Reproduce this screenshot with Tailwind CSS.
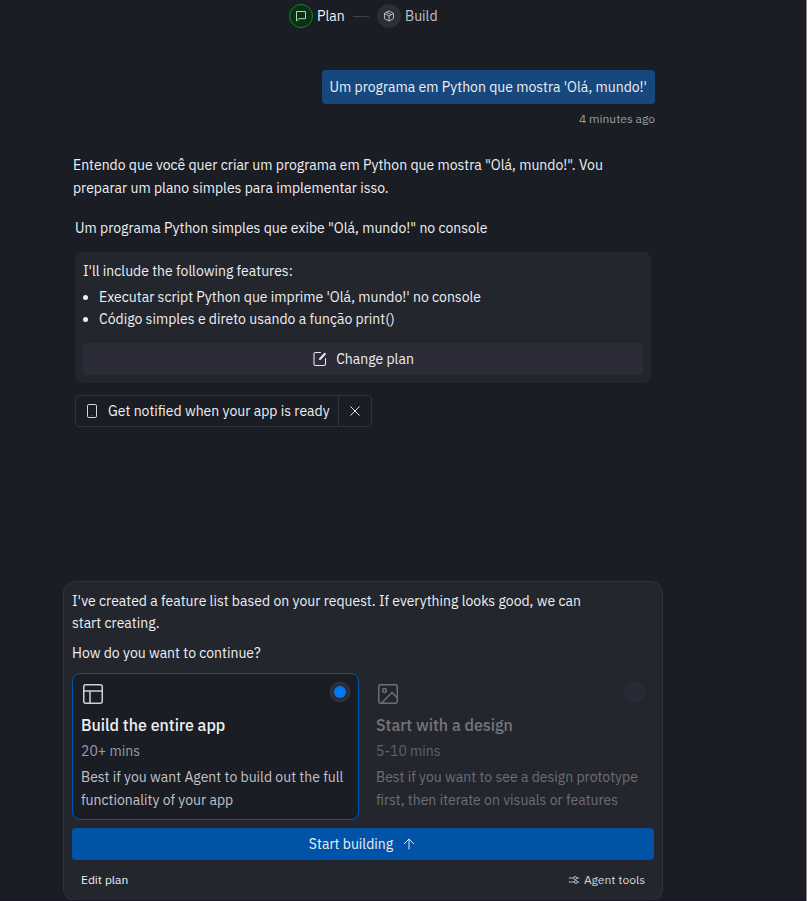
<!DOCTYPE html>
<html lang="en">
<head>
  <meta charset="UTF-8" />
  <meta name="viewport" content="width=device-width,initial-scale=1.0" />
  <title>Agent - Plan</title>
  <script src="https://cdn.jsdelivr.net/npm/@tailwindcss/browser@4"></script>
</head>
<body class="bg-[#1b1d25] font-['IBM_Plex_Sans',Roboto,sans-serif] text-[14px] leading-[22px] text-[#eef0f3]">
  <div class="w-[807px] h-[901px] overflow-hidden flex flex-col border-r border-[#85858a]">

    <!-- Steps -->
    <nav class="h-8 pl-[289px] pt-1 flex items-start">
      <div class="flex items-center h-6">
        <span class="w-6 h-6 rounded-full border border-[#0b8a1c] bg-[#0c2f18] flex items-center justify-center">
          <svg class="w-3 h-3" viewBox="0 0 12 12" fill="none" stroke="#a9dcb4" stroke-width="1"><path d="M1.5 1.5h9v7.2H3.9L1.5 10.9z" stroke-linejoin="round" /></svg>
        </span>
        <span class="ml-1 w-7 whitespace-nowrap">Plan</span>
        <span class="ml-2 w-4 h-px bg-[#3f424e]"></span>
        <span class="ml-2 w-6 h-6 rounded-full bg-[#2e2f34] flex items-center justify-center">
          <svg class="w-3 h-3" viewBox="0 0 12 12" fill="none" stroke="#b9bbc1" stroke-width="1" stroke-linejoin="round"><path d="M6 .9l4.5 2.5v5.2L6 11.1 1.5 8.6V3.4zM1.5 3.4L6 6l4.5-2.6M6 6v5.1M3.7 2.2l4.5 2.5" /></svg>
        </span>
        <span class="ml-1 whitespace-nowrap text-[#c0c3cb]">Build</span>
      </div>
    </nav>

    <!-- Chat -->
    <main class="pl-[73px] pr-[151px] pt-[38px] h-[549px] flex flex-col">
      <div class="self-end h-[34px] px-2 rounded bg-[#16487d] flex items-center whitespace-nowrap">Um programa em Python que mostra 'Olá, mundo!'</div>
      <div class="self-end mt-1 text-[12px] text-[#9a9da8]">4 minutes ago</div>
      <p class="mt-[24px] leading-[23px] whitespace-nowrap">Entendo que você quer criar um programa em Python que mostra "Olá, mundo!". Vou<br>preparar um plano simples para implementar isso.</p>

      <div class="pl-[2px] mt-[17px]">
        <p class="whitespace-nowrap">Um programa Python simples que exibe "Olá, mundo!" no console</p>
        <section class="mt-[13px] w-[576px] h-[131px] rounded-lg bg-[#24262e] px-2 pt-2">
          <p>I'll include the following features:</p>
          <ul class="mt-1 list-disc pl-4">
            <li>Executar script Python que imprime 'Olá, mundo!' no console</li>
            <li>Código simples e direto usando a função print()</li>
          </ul>
          <button class="mt-[13px] w-[560px] h-8 rounded bg-[#2b2c37] flex items-center justify-center gap-2">
            <svg class="w-4 h-4" viewBox="0 0 16 16" fill="none" stroke="#e4e6ea" stroke-linecap="round"><path d="M8.5 1.5H3.6A1.6 1.6 0 0 0 2 3.1v9.8a1.6 1.6 0 0 0 1.6 1.6h8.3a1.6 1.6 0 0 0 1.6-1.6V7.5" stroke-width="1.1" /><path d="M8 7.9l4.7-5" stroke-width="2.2" /></svg>
            <span>Change plan</span>
          </button>
        </section>
        <div class="mt-3 w-[297px] h-8 rounded border border-[#30323e] flex">
          <div class="w-[263px] border-r border-[#30323e] pl-2 flex items-center gap-2 whitespace-nowrap">
            <svg class="w-4 h-4" viewBox="0 0 16 16" fill="none" stroke="#d5d7dd"><rect x="3.5" y="1.5" width="9" height="13" rx="1.3" /><path d="M7.5 12.5h1" opacity=".5" /></svg>
            <span>Get notified when your app is ready</span>
          </div>
          <div class="flex-1 flex items-center justify-center">
            <svg class="w-4 h-4" viewBox="0 0 16 16" fill="none" stroke="#e0e2e6" stroke-linecap="round"><path d="M3.7 3.7l8.6 8.6M12.3 3.7l-8.6 8.6" /></svg>
          </div>
        </div>
      </div>
    </main>

    <!-- Continue panel -->
    <section class="ml-[63px] w-[600px] h-[320px] shrink-0 rounded-xl border border-[#30323e] bg-[#24262e] px-2 pt-2 flex flex-col">
      <p class="whitespace-nowrap">I've created a feature list based on your request. If everything looks good, we can<br>start creating.</p>
      <p class="mt-2">How do you want to continue?</p>
      <div class="mt-[9px] grid grid-cols-2 gap-2">
        <div class="h-[147px] rounded-lg border border-[#0057b0] bg-[#1b1d25] px-2 pt-2">
          <div class="flex justify-between items-start">
            <svg class="w-6 h-6" viewBox="0 0 24 24" fill="none" stroke="#cfd1d7" stroke-width="1.5"><rect x="2.75" y="2.75" width="18.5" height="18.5" rx="2" /><path d="M2.75 9h18.5M9 9v12.2" /></svg>
            <span class="w-5 h-5 rounded-full border border-[#3c3f4c] bg-[#2b2d38] flex items-center justify-center"><span class="w-3 h-3 rounded-full bg-[#0079f2]"></span></span>
          </div>
          <h2 class="mt-[7px] text-[16px] leading-6 font-medium whitespace-nowrap">Build the entire app</h2>
          <p class="mt-[3px] text-[#9a9da8]">20+ mins</p>
          <p class="mt-1 leading-[23px] text-[#c0c3cb] whitespace-nowrap">Best if you want Agent to build out the full<br>functionality of your app</p>
        </div>
        <div class="h-[147px] rounded-lg border border-[#24262f] px-2 pt-2">
          <div class="flex justify-between items-start">
            <svg class="w-6 h-6" viewBox="0 0 24 24" fill="none" stroke="#6d6f76" stroke-width="1.5"><rect x="2.75" y="2.75" width="18.5" height="18.5" rx="2" /><circle cx="8.5" cy="8.5" r="1.9" /><path d="M5.5 21L16 10.5l5.2 5.2" /></svg>
            <span class="w-5 h-5 rounded-full border border-[#2d2f3a] bg-[#272934]"></span>
          </div>
          <h2 class="mt-[7px] text-[16px] leading-6 font-medium whitespace-nowrap text-[#74767d]">Start with a design</h2>
          <p class="mt-[3px] text-[#60626c]">5-10 mins</p>
          <p class="mt-1 leading-[23px] text-[#6c6e76] whitespace-nowrap">Best if you want to see a design prototype<br>first, then iterate on visuals or features</p>
        </div>
      </div>
      <button class="mt-2 h-8 shrink-0 rounded bg-[#0053a6] flex items-center justify-center gap-2">
        <span>Start building</span>
        <svg class="w-4 h-4" viewBox="0 0 16 16" fill="none" stroke="#e4e6ea" stroke-linecap="round" stroke-linejoin="round"><path d="M8 13V3.2M3.3 7.8L8 3.1l4.7 4.7" /></svg>
      </button>
      <div class="mt-[9px] px-[9px] flex justify-between text-[12px]">
        <span>Edit plan</span>
        <span class="flex items-center gap-1 text-[#d5d7dd]">
          <svg class="w-3 h-3" viewBox="0 0 12 12" fill="none" stroke="#b9bbc1"><path d="M.8 4h4.8M8.6 4h2.6M.8 8h5.6M9.4 8h1.8" /><circle cx="7.1" cy="4" r="1.5" /><circle cx="7.9" cy="8" r="1.5" /></svg>
          <span>Agent tools</span>
        </span>
      </div>
    </section>
  </div>
  <!-- Window bottom edge -->
  <div class="fixed left-0 bottom-0 w-[806px] h-px bg-[#1d1426]"></div>
</body>
</html>
